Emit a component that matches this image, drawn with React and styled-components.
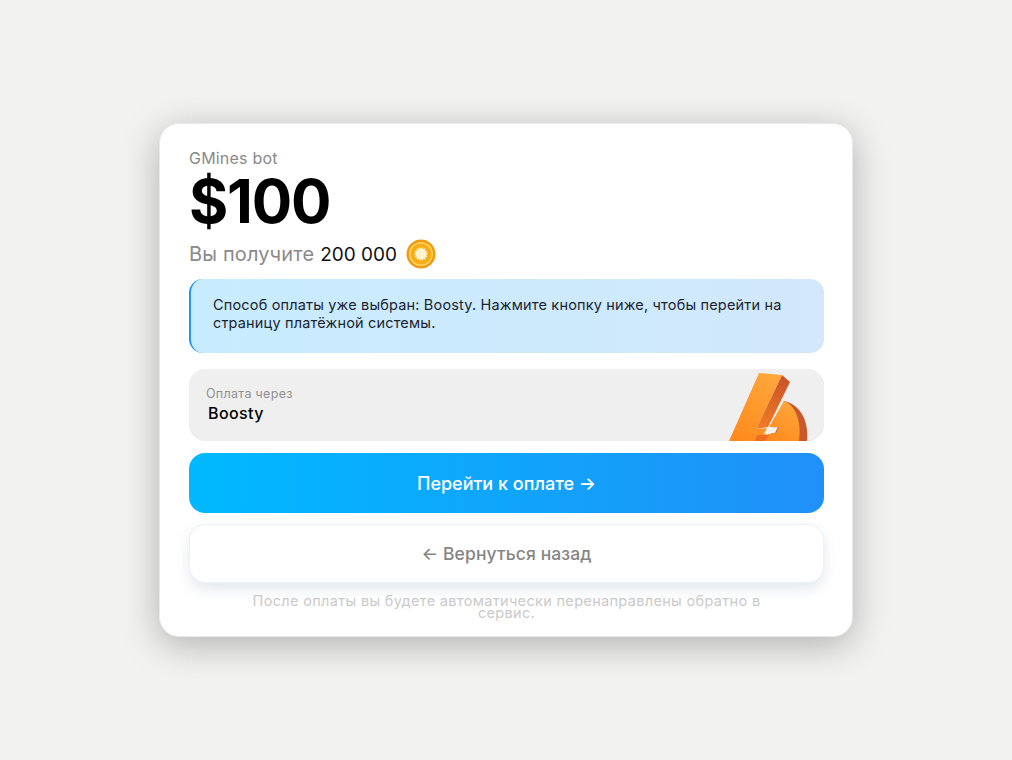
import React from "react";
import styled, { createGlobalStyle } from "styled-components";

const GlobalStyle = createGlobalStyle`
  html, body {
    margin: 0;
    padding: 0;
    background: #f2f2f0;
    font-family: "Inter", "Liberation Sans", sans-serif;
  }
  * { box-sizing: border-box; }
`;

const Page = styled.div`
  height: 100vh;
  display: flex;
  align-items: center;
  justify-content: center;
`;

const Card = styled.div`
  width: 694px;
  height: 514px;
  padding: 25px 28px 0 29px;
  background: #fff;
  border: 1px solid #e9e9e7;
  border-radius: 20px;
  box-shadow: 0 8px 36px rgba(0, 0, 0, 0.27);
  display: flex;
  flex-direction: column;
`;

const Service = styled.div`
  font-size: 16px;
  line-height: 18px;
  letter-spacing: 0.2px;
  color: #8a8a8a;
`;

const Price = styled.div`
  margin: 4px 0 3px;
  font-size: 60px;
  line-height: 60px;
  font-weight: 700;
  color: #000;
  letter-spacing: -1.2px;
`;

const Receive = styled.div`
  margin-top: 5px;
  height: 30px;
  display: flex;
  align-items: center;
  font-size: 20px;
  letter-spacing: 0.15px;
  color: #8a8a8a;
`;

const Amount = styled.span`
  color: #111;
  font-size: 19px;
  letter-spacing: 0;
  margin-left: 6px;
`;

const Coin = styled.svg`
  width: 30px;
  height: 30px;
  margin-left: 9px;
`;

const Info = styled.div`
  margin-top: 10px;
  height: 74px;
  padding: 17px 22px;
  border-left: 2px solid #2196f3;
  border-radius: 14px;
  background: linear-gradient(90deg, #c8ecff, #d2e8fc);
  font-size: 14.5px;
  line-height: 18px;
  letter-spacing: 0.17px;
  color: #1c2430;
`;

const PayRow = styled.div`
  position: relative;
  margin-top: 16px;
  height: 72px;
  padding: 17px;
  border-radius: 16px;
  background: #efefef;
  overflow: hidden;
`;

const PayLabel = styled.div`
  font-size: 12.5px;
  line-height: 15px;
  letter-spacing: 0.3px;
  color: #8f8f8f;
`;

const PayName = styled.div`
  margin: 2px 0 0 2px;
  font-size: 16px;
  line-height: 20px;
  font-weight: 500;
  letter-spacing: 0.4px;
  color: #000;
`;

const Logo = styled.svg`
  position: absolute;
  right: 0;
  top: 0;
  width: 102px;
  height: 72px;
`;

const Primary = styled.button`
  margin-top: 12px;
  height: 60px;
  border: none;
  border-radius: 16px;
  background: linear-gradient(90deg, #00b9ff, #2090f8);
  color: #fff;
  font: 500 18px "Inter", sans-serif;
`;

const Secondary = styled.button`
  margin-top: 11px;
  height: 59px;
  border: 1px solid #e9f2fb;
  border-radius: 16px;
  background: #fff;
  box-shadow: 0 6px 14px rgba(60, 90, 130, 0.14);
  color: #858585;
  font: 500 17.5px "Inter", sans-serif;
  letter-spacing: 0.1px;
`;

const Note = styled.div`
  width: 520px;
  margin: 12px auto 0;
  text-align: center;
  font-size: 14.5px;
  line-height: 12px;
  letter-spacing: 0.33px;
  color: #cacaca;
`;

const sunPoints = Array.from({ length: 28 }, (_, i) => {
  const r = i % 2 ? 5.2 : 7.2;
  const a = (i / 28) * Math.PI * 2;
  return `${15 + r * Math.cos(a)},${15 + r * Math.sin(a)}`;
}).join(" ");

const CoinIcon = () => (
  <Coin viewBox="0 0 30 30">
    <circle cx="15" cy="15" r="14.5" fill="#ef9a12" />
    <circle cx="15" cy="15" r="12" fill="#ffd766" />
    <circle cx="15" cy="15" r="10.5" fill="#f8ad16" />
    <polygon points={sunPoints} fill="#fff3cf" />
  </Coin>
);

// coordinates relative to the pay row's right part (x from 722, y from 369)
const BoostyLogo = () => (
  <Logo viewBox="0 0 102 72">
    <defs>
      <linearGradient id="boostyFace" x1="0.7" y1="0" x2="0.2" y2="1">
        <stop offset="0" stopColor="#ffa63a" />
        <stop offset="1" stopColor="#ff8a1e" />
      </linearGradient>
      <linearGradient id="boostySide" x1="0.6" y1="0" x2="0.3" y2="1">
        <stop offset="0" stopColor="#c9552a" />
        <stop offset="1" stopColor="#f07a24" />
      </linearGradient>
    </defs>
    <path d="M60 6 L68 13 L46 58 L34 60 Z" fill="url(#boostySide)" />
    <path d="M62 32 C77 35 87 50 85 72 L46 72 Z" fill="#c9582d" />
    <path d="M62 32 C73 36 80 52 77 72 L42 72 L46 65 L54 64 L57 58 L47 58 Z" fill="url(#boostyFace)" />
    <path d="M37 4 L60 6 L34 60 L47 59 L42 72 L7 72 Z" fill="url(#boostyFace)" />
    <path d="M45 59 L56 58 L53 64 L42 65 Z" fill="#f4f1ee" />
    <path d="M35 66 L47 66 L43 72 L33 72 Z" fill="#ef6f22" />
  </Logo>
);

const App = () => (
  <Page>
    <GlobalStyle />
    <Card>
      <Service>GMines bot</Service>
      <Price>$100</Price>
      <Receive>
        Вы получите <Amount>200 000</Amount>
        <CoinIcon />
      </Receive>
      <Info>
        Способ оплаты уже выбран: Boosty. Нажмите кнопку ниже, чтобы перейти на
        страницу платёжной системы.
      </Info>
      <PayRow>
        <PayLabel>Оплата через</PayLabel>
        <PayName>Boosty</PayName>
        <BoostyLogo />
      </PayRow>
      <Primary>Перейти к оплате →</Primary>
      <Secondary>← Вернуться назад</Secondary>
      <Note>После оплаты вы будете автоматически перенаправлены обратно в сервис.</Note>
    </Card>
  </Page>
);

export default App;
